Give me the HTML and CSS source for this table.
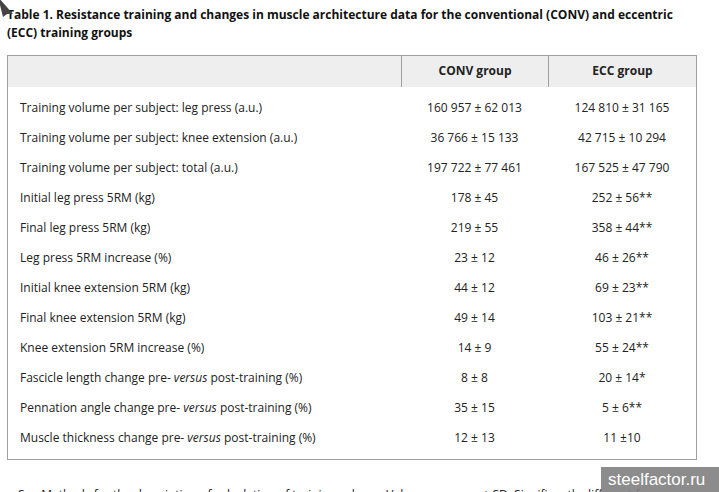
FILE: index.html
```html
<!DOCTYPE html>
<html lang="en">
<head>
<meta charset="utf-8">
<title>Table 1</title>
<link rel="stylesheet" href="styles.css">
</head>
<body>
<div class="page">
  <h3 class="caption">Table 1. Resistance training and changes in muscle architecture data for the conventional (CONV) and eccentric (ECC) training groups</h3>
  <div class="table">
    <div class="thead">
      <div class="th th-first"></div>
      <div class="th">CONV group</div>
      <div class="th">ECC group</div>
    </div>
    <div class="tbody">
      <div class="tr"><div class="td label">Training volume per subject: leg press (a.u.)</div><div class="td num">160 957 ± 62 013</div><div class="td num">124 810 ± 31 165</div></div>
      <div class="tr"><div class="td label">Training volume per subject: knee extension (a.u.)</div><div class="td num">36 766 ± 15 133</div><div class="td num">42 715 ± 10 294</div></div>
      <div class="tr"><div class="td label">Training volume per subject: total (a.u.)</div><div class="td num">197 722 ± 77 461</div><div class="td num">167 525 ± 47 790</div></div>
      <div class="tr"><div class="td label">Initial leg press 5RM (kg)</div><div class="td num">178 ± 45</div><div class="td num">252 ± 56**</div></div>
      <div class="tr"><div class="td label">Final leg press 5RM (kg)</div><div class="td num">219 ± 55</div><div class="td num">358 ± 44**</div></div>
      <div class="tr"><div class="td label">Leg press 5RM increase (%)</div><div class="td num">23 ± 12</div><div class="td num">46 ± 26**</div></div>
      <div class="tr"><div class="td label">Initial knee extension 5RM (kg)</div><div class="td num">44 ± 12</div><div class="td num">69 ± 23**</div></div>
      <div class="tr"><div class="td label">Final knee extension 5RM (kg)</div><div class="td num">49 ± 14</div><div class="td num">103 ± 21**</div></div>
      <div class="tr"><div class="td label">Knee extension 5RM increase (%)</div><div class="td num">14 ± 9</div><div class="td num">55 ± 24**</div></div>
      <div class="tr"><div class="td label">Fascicle length change pre- <em>versus</em> post-training (%)</div><div class="td num">8 ± 8</div><div class="td num">20 ± 14*</div></div>
      <div class="tr"><div class="td label">Pennation angle change pre- <em>versus</em> post-training (%)</div><div class="td num">35 ± 15</div><div class="td num">5 ± 6**</div></div>
      <div class="tr"><div class="td label">Muscle thickness change pre- <em>versus</em> post-training (%)</div><div class="td num">12 ± 13</div><div class="td num">11 ±10</div></div>
    </div>
  </div>
  <p class="footnote">See Methods for the description of calculation of training volume. Values are mean ± SD. Significantly different from CONV: *P &lt; 0.05, **P &lt; 0.01.</p>
</div>
<div class="watermark">steelfactor.ru</div>
<svg class="cursor" width="14" height="18" viewBox="0 0 14 18"><polygon points="-2,-3 13,14 7,14 3,17" fill="#444"/></svg>
</body>
</html>
```
FILE: styles.css
```css
html, body {
  margin: 0;
  padding: 0;
  background: #fff;
}
body {
  font-family: "Open Sans", "Liberation Sans", sans-serif;
  color: #222;
  font-size: 12px;
  overflow: hidden;
}
.page {
  padding: 6px 22px 0 7px;
}
.caption {
  margin: 0 0 13px 0;
  font-size: 12px;
  font-weight: 700;
  line-height: 18px;
  color: #111;
}
.table {
  border: 1px solid #a0a0a0;
  width: 688px;
}
.thead {
  display: grid;
  grid-template-columns: 393px 147px 148px;
  background: #eeeeee;
  height: 31px;
}
.th {
  display: flex;
  align-items: center;
  justify-content: center;
  font-weight: 700;
  padding-bottom: 2px;
  border-left: 1px solid #a0a0a0;
}
.th-first {
  border-left: none;
}
.tbody {
  padding: 5px 0 7px;
}
.tr {
  display: grid;
  grid-template-columns: 393px 147px 148px;
  height: 30px;
  align-items: center;
}
.label {
  padding-left: 12px;
}
.num {
  text-align: center;
}
.footnote {
  margin: 26px 0 0 11px;
  line-height: 18px;
}
.watermark {
  position: absolute;
  left: 601px;
  top: 467px;
  width: 118px;
  height: 25px;
  background: rgba(128, 128, 128, 0.9);
  color: #fff;
  font-family: "Liberation Sans", Arial, sans-serif;
  font-size: 17px;
  line-height: 25px;
  padding-left: 7px;
  box-sizing: border-box;
}
.cursor {
  position: absolute;
  left: 0;
  top: 0;
}
```
